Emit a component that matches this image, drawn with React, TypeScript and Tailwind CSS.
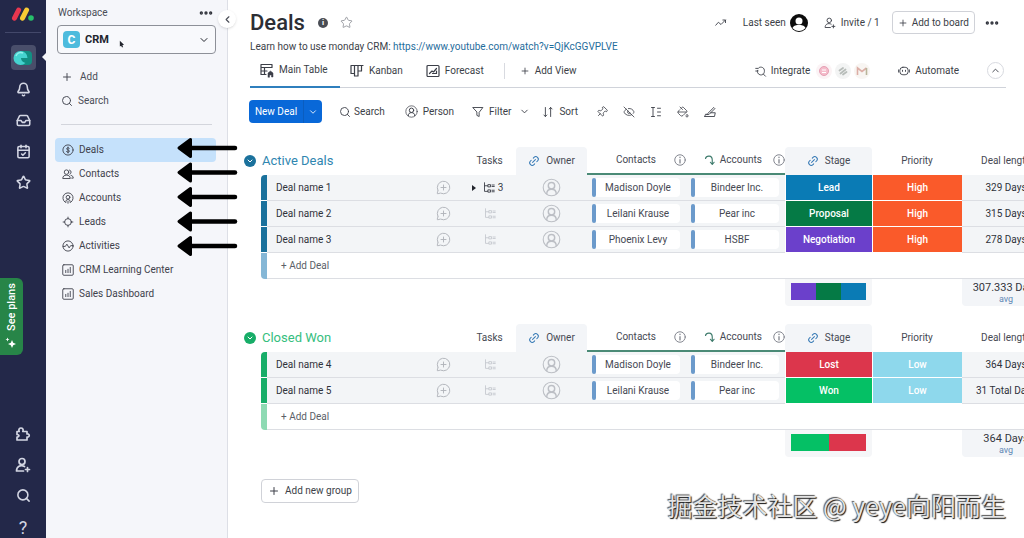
import type { ReactNode } from 'react';
import {
  Bell,
  CalendarCheck,
  ChevronDown,
  ChevronLeft,
  ChevronUp,
  Ellipsis,
  EyeOff,
  Inbox,
  Link2,
  MessageCirclePlus,
  PaintBucket,
  Pin,
  Plus,
  Search,
  Star,
} from 'lucide-react';

interface Deal {
  name: string;
  subtasks?: number;
  contact: string;
  account: string;
  stage: string;
  stageColor: string;
  priority: string;
  priorityColor: string;
  length: string;
}

interface Group {
  title: string;
  titleColor: string;
  barColor: string;
  fadedColor: string;
  deals: Deal[];
  battery: string[];
  average: string;
}

const groups: Group[] = [
  {
    title: 'Active Deals',
    titleColor: 'text-[#2f86b0]',
    barColor: 'bg-[#1a719c]',
    fadedColor: 'bg-[#85b7d6]',
    deals: [
      { name: 'Deal name 1', subtasks: 3, contact: 'Madison Doyle', account: 'Bindeer Inc.', stage: 'Lead', stageColor: 'bg-[#0a7bb5]', priority: 'High', priorityColor: 'bg-[#fa5a2a]', length: '329 Days' },
      { name: 'Deal name 2', contact: 'Leilani Krause', account: 'Pear inc', stage: 'Proposal', stageColor: 'bg-[#057a45]', priority: 'High', priorityColor: 'bg-[#fa5a2a]', length: '315 Days' },
      { name: 'Deal name 3', contact: 'Phoenix Levy', account: 'HSBF', stage: 'Negotiation', stageColor: 'bg-[#6b40cb]', priority: 'High', priorityColor: 'bg-[#fa5a2a]', length: '278 Days' },
    ],
    battery: ['bg-[#6b40cb]', 'bg-[#057a45]', 'bg-[#0a7bb5]'],
    average: '307.333 Days',
  },
  {
    title: 'Closed Won',
    titleColor: 'text-[#35be7e]',
    barColor: 'bg-[#17ad68]',
    fadedColor: 'bg-[#8edab3]',
    deals: [
      { name: 'Deal name 4', contact: 'Madison Doyle', account: 'Bindeer Inc.', stage: 'Lost', stageColor: 'bg-[#dc364c]', priority: 'Low', priorityColor: 'bg-[#8ed8ec]', length: '364 Days' },
      { name: 'Deal name 5', contact: 'Leilani Krause', account: 'Pear inc', stage: 'Won', stageColor: 'bg-[#05c065]', priority: 'Low', priorityColor: 'bg-[#8ed8ec]', length: '31 Total Days' },
    ],
    battery: ['bg-[#05c065]', 'bg-[#dc364c]'],
    average: '364 Days',
  },
];

/* ---------- icons ---------- */

function Icon({ children, className = 'size-4', box = 16 }: { children: ReactNode; className?: string; box?: number }) {
  return (
    <svg
      viewBox={`0 0 ${box} ${box}`}
      className={`shrink-0 ${className}`}
      fill="none"
      stroke="currentColor"
      strokeWidth="1.2"
      strokeLinecap="round"
      strokeLinejoin="round"
      aria-hidden="true"
    >
      {children}
    </svg>
  );
}

function Logo() {
  return (
    <svg viewBox="0 0 24 16" className="w-6 h-4" fill="none" strokeLinecap="round" aria-hidden="true">
      <path d="M3.5 12.2 7.6 4" stroke="#e8364f" strokeWidth="5" />
      <path d="M11.5 12.2 15.6 4" stroke="#f7cb35" strokeWidth="5" />
      <circle cx="20" cy="12" r="2.8" fill="#27c06b" />
    </svg>
  );
}

function ProductIcon() {
  return (
    <svg viewBox="0 0 24 24" className="size-6" aria-hidden="true">
      <rect x="7" y="5" width="14" height="14" rx="4" fill="#128f83" />
      <circle cx="9.5" cy="12" r="7" fill="#45d3cf" />
      <path d="M10 12h8a7.5 7.5 0 0 1-2 5c-3 0-6-2-6-5z" fill="#128f83" />
      <path d="M5 10a5 5 0 0 1 7-3" fill="none" stroke="#8ff0ec" strokeWidth="1.5" />
    </svg>
  );
}

const DollarIcon = () => (
  <Icon className="size-3">
    <circle cx="8" cy="8" r="6.8" />
    <path d="M9.8 6c-.4-.7-1-1-1.800-1-1 0-1.800.5-1.800 1.400C6.200 8.500 9.900 7.400 9.900 9.600 9.900 10.500 9 11 8 11s-1.700-.4-2-1.100M8 4v8" />
  </Icon>
);

const ContactsIcon = () => (
  <Icon className="size-3">
    <circle cx="6" cy="5.5" r="3" />
    <path d="M10 2.700a3 3 0 0 1 .4 5.600M1 13.500c0-2.500 2-4 5-4s5 1.500 5 4zM12 9.800c2 .4 3 1.700 3 3.700h-2" />
  </Icon>
);

const AccountsIcon = () => (
  <Icon className="size-3">
    <path d="M4 13.500A6.800 6.800 0 1 1 12 13.500" />
    <circle cx="8" cy="7" r="2.5" />
    <path d="M5 14c0-3 1.200-4.300 3-4.300S11 11 11 14M8 12v3" />
  </Icon>
);

const LeadsIcon = () => (
  <Icon className="size-3">
    <circle cx="8" cy="8" r="4.5" />
    <path d="M8 1.500v2M8 12.500v2M1.500 8h2M12.500 8h2" />
  </Icon>
);

const ActivityIcon = () => (
  <Icon className="size-3">
    <circle cx="8" cy="8" r="6.8" />
    <path d="M1.500 8.500h3l2-3 3 5 2-3h3" />
  </Icon>
);

const DashboardIcon = () => (
  <Icon className="size-3">
    <rect x="1" y="1" width="14" height="14" rx="1.5" />
    <path d="M5 8.500v3M8 7v4.500M11 4.500v7" />
  </Icon>
);

const PuzzleIcon = () => (
  <Icon className="size-4">
    <path strokeWidth="1.7" d="M2 5.500h2.200C3.200 3.500 4.500 2 6 2s2.800 1.500 1.800 3.500H12V8c3-.6 3 3.600 0 3v3H2v-3c2.600 0 2.600-2.500 0-2.500z" />
  </Icon>
);

const InviteIcon = ({ className }: { className: string }) => (
  <Icon className={className}>
    <circle cx="7" cy="4.5" r="3" />
    <path d="M9.500 9.500c-4-2-8 0-8 4.500H8.500M12.500 10.500v4M10.500 12.500h4" />
  </Icon>
);

const TableIcon = () => (
  <Icon className="size-4">
    <path d="M2 2.500h11v3H2zM2 5.500v7h5M2 9h6M5.500 5.500v7" />
    <path d="M9 15v-4l2.500-2 2.500 2v4h-1.500v-2h-2v2z" fill="currentColor" strokeWidth="0.5" />
  </Icon>
);

const KanbanIcon = () => (
  <Icon className="size-4">
    <path d="M2 2.500h12M2 2.500v8h3.500v-8M5.500 10.500V13H9V2.500M9 8h3.500V2.500" />
  </Icon>
);

const ForecastIcon = () => (
  <Icon className="size-4">
    <rect x="2" y="2.5" width="12" height="11" rx="1" />
    <path d="M4.500 10.500 7 8l1.500 1 3-3.500M11.500 8v2.500h-4" />
  </Icon>
);

const PersonIcon = ({ className = 'size-4' }: { className?: string }) => (
  <Icon className={className}>
    <circle cx="8" cy="8" r="7" strokeWidth="0.9" />
    <circle cx="8" cy="6.5" r="2.7" />
    <path d="M4 13.200c0-2.500 1.400-3.800 4-3.800s4 1.300 4 3.800" />
  </Icon>
);

const SubitemsIcon = () => (
  <Icon className="size-3">
    <path d="M2 1v11.500h4M2 5h4M7 3.500h3v3H7zM7 10.500h3v3H7zM12 4h3M12 6h3M12 11h3M12 13h3" />
  </Icon>
);

const InfoIcon = () => (
  <Icon className="size-3 text-[#777b84]">
    <circle cx="8" cy="8" r="7" />
    <path d="M8 7.500V12M8 4v.8" strokeWidth="1.6" />
  </Icon>
);

const MirrorIcon = () => (
  <Icon className="size-3 text-[#3d7a6b]">
    <path strokeWidth="1.5" d="M2 6c1-4 9-5 9 2v5.500M8.500 11l2.500 3 2.500-3" />
  </Icon>
);

/* ---------- left side ---------- */

function Rail() {
  return (
    <nav aria-label="Main" className="relative flex flex-col items-center w-[46px] shrink-0 bg-[#232849] text-[#d3d6e3]">
      <div className="flex items-center h-7">
        <Logo />
      </div>
      <div className="w-9 h-px mt-1 mb-3 bg-[#43486a]" />
      <button aria-label="CRM" className="flex items-center justify-center size-[25px] rounded bg-[#494e6a]">
        <ProductIcon />
      </button>
      <div className="flex flex-col items-center gap-4 mt-3">
        <button aria-label="Notifications"><Bell size={15} strokeWidth={2.5} /></button>
        <button aria-label="Inbox"><Inbox size={15} strokeWidth={2.5} /></button>
        <button aria-label="My work"><CalendarCheck size={15} strokeWidth={2.5} /></button>
        <button aria-label="Favorites"><Star size={15} strokeWidth={2.5} /></button>
      </div>
      <div className="flex flex-col items-center gap-[15px] mt-auto">
        <button aria-label="Apps"><PuzzleIcon /></button>
        <button aria-label="Invite members"><InviteIcon className="size-4 stroke-[1.7]" /></button>
        <button aria-label="Search everything"><Search size={15} strokeWidth={2.5} /></button>
        <button className="h-5 text-lg leading-5" aria-label="Help">?</button>
      </div>
      <span className="absolute top-[53px] right-0 border-y-4 border-y-transparent border-r-4 border-r-[#f5f6fa]" />
      <button className="absolute left-0 top-[278px] flex items-center justify-center gap-[6px] w-[23px] h-[77px] bg-[#278548] text-white text-[11px] font-medium rotate-180 [writing-mode:vertical-rl] rounded-l-md">
        <svg viewBox="0 0 12 12" className="size-3 rotate-180" fill="currentColor" aria-hidden="true">
          <path d="M7 3 8.200 5.800 11 7 8.200 8.200 7 11 5.800 8.200 3 7l2.800-1.200zM2.500.5l.6 1.400 1.400.6-1.400.6-.6 1.400-.6-1.400L.5 2.500l1.400-.6z" />
        </svg>
        See plans
      </button>
    </nav>
  );
}

const boards = [
  { label: 'Deals', icon: <DollarIcon /> },
  { label: 'Contacts', icon: <ContactsIcon /> },
  { label: 'Accounts', icon: <AccountsIcon /> },
  { label: 'Leads', icon: <LeadsIcon /> },
  { label: 'Activities', icon: <ActivityIcon /> },
  { label: 'CRM Learning Center', icon: <DashboardIcon /> },
  { label: 'Sales Dashboard', icon: <DashboardIcon /> },
];

function Arrows() {
  return (
    <svg viewBox="0 0 62 124" className="absolute left-[130px] top-[136px] z-20 w-[62px] h-[124px] text-black" aria-hidden="true">
      {[12, 36.5, 61, 85.5, 110].map((y) => (
        <g key={y} transform={`translate(0 ${y})`} stroke="currentColor" strokeLinecap="round" strokeLinejoin="round">
          <path d="M14 0H59" strokeWidth="4.5" />
          <path d="M3 0 14.500-8.500v17z" fill="currentColor" strokeWidth="3" />
        </g>
      ))}
    </svg>
  );
}

function Sidebar() {
  return (
    <aside className="relative w-[182px] shrink-0 px-[9px] bg-[#f5f6fa] border-r border-[#dddfe6] text-[#4a4d57]">
      <div className="flex items-center justify-between pl-[3px] pr-[4px] h-[25px]">
        <span>Workspace</span>
        <button aria-label="Workspace options" className="text-[#2f323b]"><Ellipsis size={16} strokeWidth={3} /></button>
      </div>
      <button className="flex items-center w-full max-w-[159px] h-[29px] gap-[5px] px-[5px] ml-[2px] rounded-sm border border-[#8d9098] bg-[#f8f9fc] text-[#22252d]">
        <span className="flex items-center justify-center size-[17px] rounded bg-[#4dbbdd] text-white text-[12px] font-bold">C</span>
        <span className="text-[11px] font-bold">CRM</span>
        <svg viewBox="0 0 6 8" className="w-[5px] h-2 mt-2 ml-[5px]" aria-hidden="true"><path d="M1 0 6 5 4 5.500 5 8 3.500 8 2.500 6 1 7z" fill="#22252d" /></svg>
        <ChevronDown size={12} className="ml-auto" />
      </button>
      <button className="flex items-center gap-[7px] h-6 mt-[11px] ml-[6px]">
        <Plus size={12} /> Add
      </button>
      <button className="flex items-center gap-[5px] h-6 ml-[6px]">
        <Search size={12} /> Search
      </button>
      <div className="h-px mt-[11px] mb-[13px] mx-[6px] bg-[#d3d5dc]" />
      <ul className="mr-[2px]">
        {boards.map((board, i) => (
          <li key={board.label}>
            <a
              href="#"
              aria-current={i === 0 ? 'page' : undefined}
              className={`flex items-center gap-[5px] h-6 pl-[7px] rounded-sm text-[#3f424c] ${i === 0 ? 'bg-[#c5e1fb]' : ''}`}
            >
              {board.icon}
              {board.label}
            </a>
          </li>
        ))}
      </ul>
      <Arrows />
      <button aria-label="Collapse sidebar" className="absolute top-[10px] -right-[9px] z-10 flex items-center justify-center size-[18px] rounded-full bg-white shadow">
        <ChevronLeft size={11} strokeWidth={2.5} />
      </button>
    </aside>
  );
}

/* ---------- board header ---------- */

function Header() {
  return (
    <header className="pl-[22px]">
      <div className="flex items-center h-[36px] pt-[9px] pr-6">
        <h1 className="text-[22px] leading-6 font-medium text-[#2c2e34]">Deals</h1>
        <span className="flex items-center justify-center size-[10px] ml-[13px] rounded-full bg-[#4a4d55] text-white text-[8px] font-bold">i</span>
        <button aria-label="Add to favorites" className="ml-3 text-[#8a8d94]"><Star size={13} strokeWidth={1.5} /></button>
        <div className="flex items-center ml-auto">
          <Icon className="size-3 mr-4"><path d="M1 11l3.500-4L8 10l6-6M10.500 4H14v3.500" /></Icon>
          <span>Last seen</span>
          <svg viewBox="0 0 18 18" className="size-[18px] ml-1" aria-hidden="true">
            <circle cx="9" cy="9" r="9" fill="#0c0c0c" />
            <circle cx="9" cy="7" r="3.5" fill="#fff" />
            <path d="M2.500 14c1.500-3 4-3 6.500-3s5 0 6.500 3c-3.300 4-9.700 4-13 0z" fill="#fff" />
          </svg>
          <button className="flex items-center gap-[5px] ml-4">
            <InviteIcon className="size-3" /> Invite / 1
          </button>
          <button className="flex items-center gap-1 h-[23px] ml-3 px-[5px] rounded-sm border border-[#d0d2d8]">
            <Plus size={10} /> Add to board
          </button>
          <button aria-label="Board options" className="ml-[9px] text-[#2f323b]"><Ellipsis size={16} strokeWidth={3} /></button>
        </div>
      </div>
      <p className="h-[22px] leading-[22px]">
        Learn how to use monday CRM:{' '}
        <a href="https://www.youtube.com/watch?v=QjKcGGVPLVE" className="text-[#1f6d9c]">https://www.youtube.com/watch?v=QjKcGGVPLVE</a>
      </p>
      <div className="flex items-center h-[30px] mr-[18px] border-b border-[#d0d3da]">
        <div role="tablist" className="flex items-center h-full">
          <button role="tab" aria-selected="true" className="flex items-center gap-1 h-[30px] w-[90px] pl-[9px] pb-1 border-b-2 border-[#2f7fbd]">
            <TableIcon /> <span className="whitespace-nowrap">Main Table</span>
          </button>
          <button role="tab" aria-selected="false" className="flex items-center gap-1 h-[30px] ml-[9px] pb-1">
            <KanbanIcon /> Kanban
          </button>
          <button role="tab" aria-selected="false" className="flex items-center gap-1 h-[30px] ml-[22px] pb-1">
            <ForecastIcon /> Forecast
          </button>
        </div>
        <span className="w-px h-4 ml-5 mb-1 bg-[#d8dae0]" />
        <button className="flex items-center gap-[5px] ml-[15px] pb-1"><Plus size={10} /> Add View</button>
        <div className="flex items-center pb-1 ml-auto mr-[2px]">
          <button className="flex items-center gap-1">
            <Icon className="size-3"><path d="M1 4.500h3.500C5.500 2 12 2 12.500 7s-3 7-6 6-4-4-3-6M11 12l3 3M1 8h3" /></Icon>
            Integrate
          </button>
          <div className="flex items-center gap-[3px] ml-[6px]">
            <span className="flex items-center justify-center size-4 rounded-full bg-[#fbf3f5]">
              <svg viewBox="0 0 12 12" className="size-3" aria-hidden="true"><circle cx="6" cy="6" r="4.5" fill="#f5bccb" stroke="#e5a0b4" /><path d="M4 5h4M4 7.500h4" stroke="#fff" /></svg>
            </span>
            <span className="flex items-center justify-center size-4 rounded-full bg-[#f3f4f4] text-[#b7bcb9]">
              <svg viewBox="0 0 12 12" className="size-3" fill="none" stroke="currentColor" strokeWidth="1.8" strokeLinecap="round" aria-hidden="true"><path d="M2.500 5.500 6 3M3.500 8.500l5-4M6 9.500l3.500-2.500" /></svg>
            </span>
            <span className="flex items-center justify-center size-4 rounded-full bg-[#f8f5f2]">
              <svg viewBox="0 0 12 12" className="size-3" fill="none" strokeWidth="1.6" aria-hidden="true"><path d="M1.500 10V3L6 6.500 10.500 3" stroke="#dcaea6" /><path d="M10.500 3v7" stroke="#b9b59a" /></svg>
            </span>
          </div>
          <button className="flex items-center gap-[5px] ml-7">
            <Icon className="size-3"><rect x="2.5" y="3" width="11" height="10" rx="4" /><path d="M.8 6.500v3M15.200 6.500v3M6 7v1.500M10 7v1.500" /></Icon>
            Automate
          </button>
          <button aria-label="Collapse header" className="flex items-center justify-center size-[17px] ml-7 rounded-full border border-[#d8dae0]">
            <ChevronUp size={11} />
          </button>
        </div>
      </div>
    </header>
  );
}

function Toolbar() {
  return (
    <div className="flex items-center pl-[21px] mt-3 h-[23px]">
      <div className="flex w-[73px] h-full rounded-sm bg-[#0968d8] text-white">
        <button className="flex-1">New Deal</button>
        <button aria-label="More item types" className="flex items-center justify-center w-[19px] border-l border-[#0a5dbf]"><ChevronDown size={10} /></button>
      </div>
      <button className="flex items-center gap-[3px] ml-[17px]"><Search size={12} strokeWidth={1.8} /> Search</button>
      <button className="flex items-center gap-[5px] ml-5"><PersonIcon className="size-[13px]" /> Person</button>
      <button className="flex items-center gap-[5px] ml-[18px]">
        <Icon className="size-3"><path d="M1.500 2h13L9.500 8.500V14l-3-1.500v-4z" /></Icon>
        Filter
      </button>
      <button aria-label="Filter options" className="ml-2"><ChevronDown size={11} /></button>
      <button className="flex items-center gap-[5px] ml-3">
        <Icon className="size-3"><path d="M4.500 2v12M2.500 12l2 2 2-2M11.500 14V2M9.500 4l2-2 2 2" /></Icon>
        Sort
      </button>
      <div className="flex items-center gap-[15px] ml-[18px]">
        <button aria-label="Pin columns"><Pin size={12} strokeWidth={1.6} className="rotate-45" /></button>
        <button aria-label="Hidden columns"><EyeOff size={12} strokeWidth={1.6} /></button>
        <button aria-label="Row height"><Icon className="size-3"><path d="M4 2v12M2 2h4M2 14h4M10 3h4M10 8h4M10 13h4" /></Icon></button>
        <button aria-label="Conditional coloring"><PaintBucket size={12} strokeWidth={1.6} /></button>
        <button aria-label="Color rows">
          <Icon className="size-3"><path d="M1 14h13l1-5H9M5 10l8-8 1.500 1.500L7 11l-3 .5zM1 14l1-3h2" /></Icon>
        </button>
      </div>
    </div>
  );
}

/* ---------- board table ---------- */

function LinkedCell({ children }: { children: ReactNode }) {
  return (
    <td className="border-b border-[#dcdee3] bg-[#f3f5f7] p-0">
      <div className="flex items-center h-[19px] pl-[5px] pr-[6px]">
        <span className="w-1 h-full shrink-0 rounded-sm bg-[#6b9acb]" />
        <a href="#" className="flex-1 h-full rounded-r-sm bg-white leading-[19px] text-center whitespace-nowrap text-[#464953]">{children}</a>
      </div>
    </td>
  );
}

function GroupTable({ group }: { group: Group }) {
  const cell = 'border-b border-[#dcdee3] bg-[#f3f5f7] p-0';
  return (
    <table className="table-fixed w-full min-w-[807px] border-separate border-spacing-0 text-center">
      <colgroup>
        <col className="w-[18px]" />
        <col className="w-[6px]" />
        <col />
        <col className="w-[57px]" />
        <col className="w-[71px]" />
        <col className="w-[99px]" />
        <col className="w-[99px]" />
        <col className="w-[87px]" />
        <col className="w-[90px]" />
        <col className="w-[88px]" />
      </colgroup>
      <thead>
        <tr className="h-7 text-[#464953]">
          <th colSpan={3} className="p-0 font-normal">
            <button className={`flex items-center gap-[6px] text-[13px] ${group.titleColor}`}>
              <span className={`flex items-center justify-center size-3 ml-px rounded-full text-white ${group.barColor}`}>
                <ChevronDown size={8} strokeWidth={3} />
              </span>
              {group.title}
            </button>
          </th>
          <th className="p-0 pl-1 font-normal">Tasks</th>
          <th className="p-0 font-normal rounded-t bg-[#f3f5f8]">
            <span className="flex items-center justify-center gap-[6px]">
              <Link2 size={12} className="-rotate-45 text-[#3579b5]" /> Owner
            </span>
          </th>
          <th className="p-0 font-normal border-b-2 border-[#4a8a76]">
            <span className="flex items-center justify-end gap-[18px]">Contacts <InfoIcon /></span>
          </th>
          <th className="p-0 font-normal border-b-2 border-[#4a8a76]">
            <span className="flex items-center justify-end">
              <MirrorIcon />
              <span className="ml-1 mr-[11px]">Accounts</span>
              <InfoIcon />
            </span>
          </th>
          <th className="p-0 font-normal rounded-t bg-[#f3f5f8]">
            <span className="flex items-center justify-center gap-[6px]">
              <Link2 size={12} className="-rotate-45 text-[#3579b5]" /> Stage
            </span>
          </th>
          <th className="p-0 font-normal">Priority</th>
          <th className="p-0 font-normal whitespace-nowrap">Deal length</th>
        </tr>
      </thead>
      <tbody>
        {group.deals.map((deal, i) => (
          <tr key={deal.name} className="h-[26px]">
            <td className="p-0" />
            <td className={`p-0 border-b border-white ${group.barColor} ${i === 0 ? 'rounded-tl-sm' : ''}`} />
            <td className={cell}>
              <div className="flex items-center justify-between pl-[9px] pr-2 text-[#2f323a]">
                {deal.name}
                <button aria-label={`Comment on ${deal.name}`} className="text-[#b0b3ba]"><MessageCirclePlus size={15} strokeWidth={1.5} /></button>
              </div>
            </td>
            <td className={cell}>
              {deal.subtasks ? (
                <span className="flex items-center justify-center gap-[3px]">
                  <span className="mr-1 border-y-[3px] border-y-transparent border-l-4 border-l-[#22252d]" />
                  <SubitemsIcon /> {deal.subtasks}
                </span>
              ) : (
                <span className="flex justify-center pl-1 text-[#c6c9cf]"><SubitemsIcon /></span>
              )}
            </td>
            <td className={cell}>
              <span className="flex justify-center text-[#bcbfc5]"><PersonIcon className="size-[19px]" /></span>
            </td>
            <LinkedCell>{deal.contact}</LinkedCell>
            <LinkedCell>{deal.account}</LinkedCell>
            <td className={`p-0 border-b border-l border-white font-medium text-white ${deal.stageColor}`}>{deal.stage}</td>
            <td className={`p-0 border-b border-l border-white font-medium text-white ${deal.priorityColor}`}>{deal.priority}</td>
            <td className={`${cell} whitespace-nowrap text-[#2f323a]`}>{deal.length}</td>
          </tr>
        ))}
        <tr className="h-[26px]">
          <td className="p-0" />
          <td className={`p-0 rounded-bl-sm ${group.fadedColor}`} />
          <td colSpan={8} className="p-0 border-b border-[#dcdee3] text-left">
            <button className="pl-[14px] text-[#5c5f68]">+ Add Deal</button>
          </td>
        </tr>
        <tr className="h-[27px] align-top">
          <td colSpan={7} className="p-0" />
          <td className="p-0 px-[6px] pt-1 rounded-b bg-[#f5f6f8]">
            <div className="flex h-[17px]">
              {group.battery.map((color) => (
                <span key={color} className={`flex-1 ${color}`} />
              ))}
            </div>
          </td>
          <td className="p-0" />
          <td className="p-0 pt-[3px] rounded-b bg-[#f3f5f8] whitespace-nowrap text-[11px] leading-3 text-[#33363e]">
            {group.average}
            <span className="block text-[9px] leading-[10px] text-[#5f87b5]">avg</span>
          </td>
        </tr>
      </tbody>
    </table>
  );
}

export default function App() {
  return (
    <div className="relative flex h-screen overflow-hidden bg-white font-[family-name:Roboto,'Noto_Sans_CJK_SC',sans-serif] text-[10px] leading-4 text-[#3c3f48]">
      <Rail />
      <Sidebar />
      <main className="flex-1 min-w-0">
        <Header />
        <Toolbar />
        <div className="pl-[15px] pt-6 overflow-hidden">
          <div className="flex flex-col gap-[18px]">
            {groups.map((group) => (
              <GroupTable key={group.title} group={group} />
            ))}
          </div>
          <button className="flex items-center gap-[5px] h-6 mt-[22px] ml-[18px] px-[6px] rounded-sm border border-[#d0d2d8]">
            <Plus size={12} /> Add new group
          </button>
        </div>
      </main>
      <div className="absolute right-[18px] bottom-[15px] text-[25px] leading-9 whitespace-nowrap text-[#e4e4e4] font-[family-name:'Noto_Sans_CJK_SC',sans-serif] [text-shadow:1px_1px_1px_#111,-1px_-1px_1px_#555]">
        掘金技术社区 @ yeye向阳而生
      </div>
    </div>
  );
}
